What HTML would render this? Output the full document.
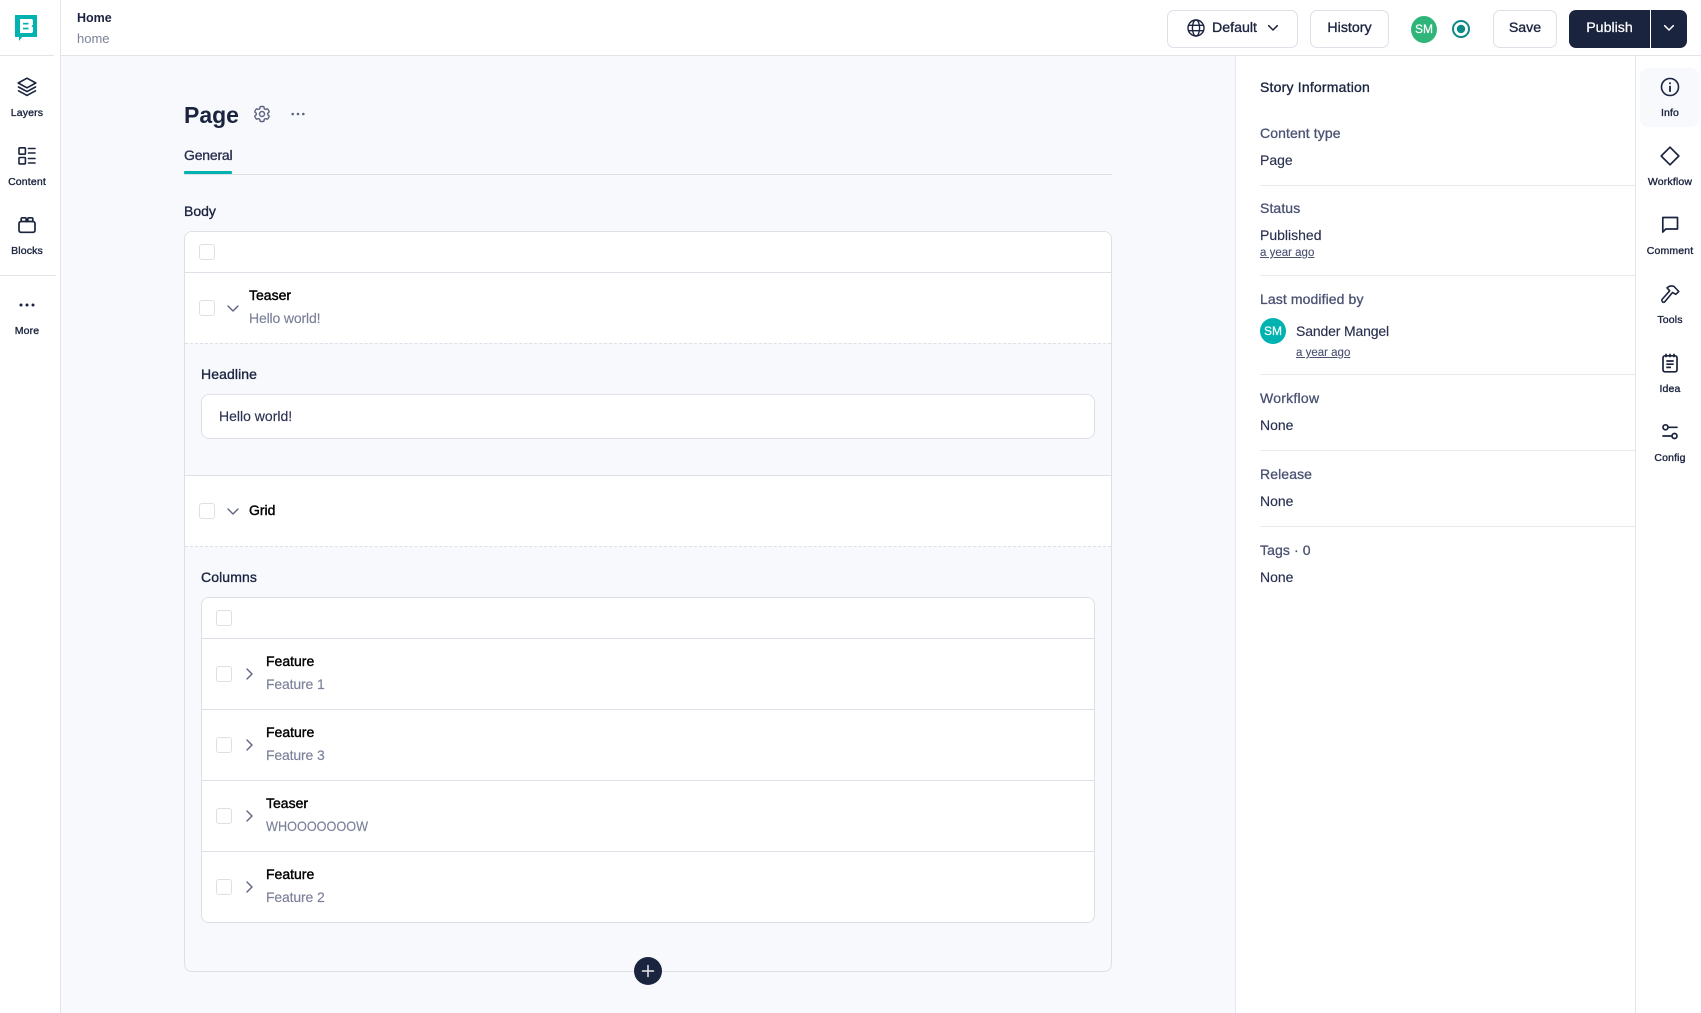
<!DOCTYPE html>
<html><head><meta charset="utf-8"><title>Home</title>
<style>
html,body{margin:0;padding:0}
body{width:1701px;height:1013px;position:relative;overflow:hidden;background:#fff;font-family:"Liberation Sans",sans-serif;color:#1b243f;-webkit-font-smoothing:antialiased}
.a{position:absolute;box-sizing:border-box}
.t{position:absolute;white-space:nowrap;line-height:20px;height:20px}
.m{-webkit-text-stroke:.35px currentColor}
.nl{position:absolute;width:60px;text-align:center;font-size:10.5px;letter-spacing:.15px;line-height:14px;height:14px;-webkit-text-stroke:.35px currentColor;white-space:nowrap}
.lb{font-size:14px;letter-spacing:.1px;color:#4b5272;-webkit-text-stroke:.3px currentColor}
.v{font-size:14px;color:#2a3150;-webkit-text-stroke:.15px currentColor}
.ago{font-size:11.5px;color:#4b5272;text-decoration:underline;-webkit-text-stroke:.1px currentColor}
.hr{position:absolute;left:1260px;width:375px;height:1px;background:#e8e9ef}
.cb{position:absolute;width:16px;height:16px;border:1px solid #dfe0e7;border-radius:3px;background:#fff;box-sizing:border-box}
.tt{font-size:14px;color:#000;-webkit-text-stroke:.4px #000}
.st{font-size:14px;letter-spacing:-.15px;color:#7c8199;-webkit-text-stroke:.15px currentColor}
.btn{position:absolute;top:10px;height:38px;border:1px solid #dfe0e7;border-radius:7px;background:#fff;box-sizing:border-box;font-size:14.2px;text-align:center;line-height:35px;-webkit-text-stroke:.35px currentColor;color:#1b243f}
svg{position:absolute;overflow:visible;fill:none;stroke-linecap:round;stroke-linejoin:round}
</style></head><body>

<!-- main background -->
<div class="a" style="left:61px;top:56px;width:1175px;height:957px;background:#f8f9fd"></div>
<div class="a" style="left:60px;top:0;width:1px;height:1013px;background:#e3e5ee"></div>
<div class="a" style="left:60px;top:55px;width:1641px;height:1px;background:#e3e4ea"></div>
<div class="a" style="left:0;top:55px;width:54px;height:1px;background:#e3e4ea"></div>
<div class="a" style="left:0;top:275px;width:56px;height:1px;background:#e3e4ea"></div>
<div class="a" style="left:1235px;top:56px;width:1px;height:957px;background:#e6e8f1"></div>
<div class="a" style="left:1635px;top:56px;width:1px;height:957px;background:#e3e5ee"></div>

<!-- logo -->
<svg style="left:15px;top:15px" width="22" height="26" viewBox="0 0 22 26">
<path d="M0 0H22V22H7L4 26V22H0Z" fill="#00b3b0"/>
<path d="M5 4H16Q18 4 18 6V9.500L16.500 11 18 12.500V16Q18 18 16 18H5Z" fill="#fff"/>
<rect x="8" y="7.800" width="5.500" height="1.700" fill="#00b3b0"/><rect x="8" y="12.700" width="5.500" height="1.700" fill="#00b3b0"/>
</svg>

<!-- left nav -->
<svg style="left:17px;top:77px" width="20" height="20" viewBox="0 0 20 20" stroke="#1b243f" stroke-width="1.600">
<path d="M10 1.200 18.800 6 10 10.800 1.200 6Z"/><path d="M1.500 10 10 14.600 18.500 10"/><path d="M1.500 13.800 10 18.400 18.500 13.800"/></svg>
<div class="nl" style="left:-3px;top:106px">Layers</div>
<svg style="left:18px;top:147px" width="18" height="18" viewBox="0 0 18 18" stroke="#1b243f" stroke-width="1.600">
<rect x="1" y=".8" width="6.400" height="6.400" rx=".8"/><rect x="1" y="10.500" width="6.400" height="6.400" rx=".8"/>
<path d="M10.500 1.500H17M10.500 6H17M10.500 11.500H17M10.500 16H17"/></svg>
<div class="nl" style="left:-3px;top:175px">Content</div>
<svg style="left:18px;top:216px" width="18" height="18" viewBox="0 0 18 18" stroke="#1b243f" stroke-width="1.700">
<rect x="1" y="5.500" width="16" height="10.800" rx="2"/><path d="M3.200 5.500V3Q3.200 1.800 4.400 1.800H7Q8.200 1.800 8.200 3V5.500M9.800 5.500V3Q9.800 1.800 11 1.800H13.600Q14.800 1.800 14.800 3V5.500"/></svg>
<div class="nl" style="left:-3px;top:244px">Blocks</div>
<svg style="left:19px;top:303px" width="16" height="4" viewBox="0 0 16 4"><circle cx="2" cy="2" r="1.500" fill="#1b243f"/><circle cx="8" cy="2" r="1.500" fill="#1b243f"/><circle cx="14" cy="2" r="1.500" fill="#1b243f"/></svg>
<div class="nl" style="left:-3px;top:324px">More</div>

<!-- header left -->
<div class="t" style="left:77px;top:8px;font-size:12.500px;font-weight:700">Home</div>
<div class="t" style="left:77px;top:29px;font-size:13px;color:#7c8199">home</div>

<!-- header right -->
<div class="btn" style="left:1167px;width:131px"></div>
<svg style="left:1187px;top:19px" width="18" height="18" viewBox="0 0 18 18" stroke="#1b243f" stroke-width="1.400">
<circle cx="9" cy="9" r="8"/><ellipse cx="9" cy="9" rx="3.600" ry="8"/><path d="M1.500 6.300H16.500M1.500 11.700H16.500"/></svg>
<div class="t m" style="left:1212px;top:18px;font-size:14.200px">Default</div>
<svg style="left:1268px;top:25px" width="10" height="6" viewBox="0 0 10 6" stroke="#1b243f" stroke-width="1.500"><path d="M.7.700 5 5 9.300.700"/></svg>
<div class="btn" style="left:1310px;width:79px">History</div>
<div class="a" style="left:1411px;top:16px;width:26px;height:27px;border-radius:50%;background:#2fb57a;color:#fff;font-size:12px;line-height:27px;text-align:center;-webkit-text-stroke:.2px #fff">SM</div>
<svg style="left:1451px;top:19px" width="20" height="20" viewBox="0 0 20 20"><circle cx="10" cy="10" r="8" stroke="#0b8a86" stroke-width="2"/><circle cx="10" cy="10" r="4.200" fill="#0b8a86"/></svg>
<div class="btn" style="left:1493px;width:64px">Save</div>
<div class="a" style="left:1569px;top:10px;width:81px;height:38px;background:#1b243f;border-radius:7px 0 0 7px;color:#fff;font-size:14.200px;line-height:37px;text-align:center;-webkit-text-stroke:.25px #fff">Publish</div>
<div class="a" style="left:1651px;top:10px;width:36px;height:38px;background:#1b243f;border-radius:0 7px 7px 0"></div>
<svg style="left:1664px;top:25px" width="10" height="6" viewBox="0 0 10 6" stroke="#fff" stroke-width="1.500"><path d="M.7.700 5 5 9.300.700"/></svg>

<!-- page title -->
<div class="t" style="left:184px;top:101px;height:28px;line-height:28px;font-size:23px;font-weight:700;color:#1b243f">Page</div>
<svg style="left:252px;top:104px" width="20" height="20" viewBox="0 0 24 24" stroke="#5d6380" stroke-width="1.700">
<path d="M9.594 3.940c.09-.542.56-.94 1.110-.94h2.593c.55 0 1.020.398 1.110.94l.213 1.281c.063.374.313.686.645.870.074.040.147.083.220.127.325.196.720.257 1.075.124l1.217-.456a1.125 1.125 0 0 1 1.370.490l1.296 2.247a1.125 1.125 0 0 1-.260 1.431l-1.003.827c-.293.241-.438.613-.430.992a7.723 7.723 0 0 1 0 .255c-.008.378.137.750.430.991l1.004.827c.424.350.534.955.260 1.430l-1.298 2.247a1.125 1.125 0 0 1-1.369.491l-1.217-.456c-.355-.133-.750-.072-1.076.124a6.470 6.470 0 0 1-.220.128c-.331.183-.581.495-.644.869l-.213 1.281c-.09.543-.56.940-1.110.940h-2.594c-.55 0-1.019-.398-1.110-.940l-.213-1.281c-.062-.374-.312-.686-.644-.870a6.520 6.520 0 0 1-.220-.127c-.325-.196-.720-.257-1.076-.124l-1.217.456a1.125 1.125 0 0 1-1.369-.490l-1.297-2.247a1.125 1.125 0 0 1 .260-1.431l1.004-.827c.292-.240.437-.613.430-.991a6.932 6.932 0 0 1 0-.255c.007-.380-.138-.751-.430-.992l-1.004-.827a1.125 1.125 0 0 1-.260-1.430l1.297-2.247a1.125 1.125 0 0 1 1.370-.491l1.216.456c.356.133.751.072 1.076-.124.072-.044.146-.086.220-.128.332-.183.582-.495.644-.869l.214-1.280Z"/><circle cx="12" cy="12" r="3"/></svg>
<svg style="left:291px;top:112px" width="14" height="4" viewBox="0 0 14 4"><circle cx="1.700" cy="2" r="1.300" fill="#5d6380"/><circle cx="7" cy="2" r="1.300" fill="#5d6380"/><circle cx="12.300" cy="2" r="1.300" fill="#5d6380"/></svg>
<div class="t m" style="left:184px;top:145px;font-size:14px;letter-spacing:-.2px;color:#2a3150">General</div>
<div class="a" style="left:184px;top:174px;width:928px;height:1px;background:#dcdde4"></div>
<div class="a" style="left:184px;top:171px;width:48px;height:3px;background:#00b3b0;border-radius:1px"></div>
<div class="t m" style="left:184px;top:201px;font-size:14px">Body</div>

<!-- outer box -->
<div class="a" style="left:184px;top:231px;width:928px;height:741px;border:1px solid #dfe0e7;border-radius:8px;background:#f8f9fd"></div>
<div class="a" style="left:185px;top:232px;width:926px;height:111px;background:#fff;border-radius:7px 7px 0 0"></div>
<div class="a" style="left:185px;top:272px;width:926px;height:1px;background:#dfe0e7"></div>
<div class="cb" style="left:199px;top:244px"></div>
<div class="cb" style="left:199px;top:300px"></div>
<svg style="left:227px;top:305px" width="12" height="7" viewBox="0 0 12 7" stroke="#5d6380" stroke-width="1.400"><path d="M1 1 6 6 11 1"/></svg>
<div class="t tt" style="left:249px;top:285px">Teaser</div>
<div class="t st" style="left:249px;top:308px">Hello world!</div>
<div class="a" style="left:185px;top:343px;width:926px;height:0;border-top:1px dashed #dfe0e7"></div>

<div class="t m" style="left:201px;top:364px;font-size:14px;letter-spacing:.1px">Headline</div>
<div class="a" style="left:201px;top:394px;width:894px;height:45px;background:#fff;border:1px solid #dfe0e7;border-radius:8px"></div>
<div class="t v" style="left:219px;top:406px">Hello world!</div>

<div class="a" style="left:185px;top:475px;width:926px;height:72px;background:#fff;border-top:1px solid #dfe0e7"></div>
<div class="cb" style="left:199px;top:503px"></div>
<svg style="left:227px;top:508px" width="12" height="7" viewBox="0 0 12 7" stroke="#5d6380" stroke-width="1.400"><path d="M1 1 6 6 11 1"/></svg>
<div class="t tt" style="left:249px;top:500px">Grid</div>
<div class="a" style="left:185px;top:546px;width:926px;height:0;border-top:1px dashed #dfe0e7"></div>

<div class="t m" style="left:201px;top:567px;font-size:14px;letter-spacing:.1px">Columns</div>

<!-- inner box -->
<div class="a" style="left:201px;top:597px;width:894px;height:326px;background:#fff;border:1px solid #dfe0e7;border-radius:8px"></div>
<div class="cb" style="left:216px;top:610px"></div>
<div class="a" style="left:202px;top:638px;width:892px;height:1px;background:#dfe0e7"></div>
<div class="a" style="left:202px;top:709px;width:892px;height:1px;background:#dfe0e7"></div>
<div class="a" style="left:202px;top:780px;width:892px;height:1px;background:#dfe0e7"></div>
<div class="a" style="left:202px;top:851px;width:892px;height:1px;background:#dfe0e7"></div>

<div class="cb" style="left:216px;top:666px"></div>
<svg style="left:246px;top:668px" width="7" height="12" viewBox="0 0 7 12" stroke="#5d6380" stroke-width="1.400"><path d="M1 1 6 6 1 11"/></svg>
<div class="t tt" style="left:266px;top:651px">Feature</div>
<div class="t st" style="left:266px;top:674px">Feature 1</div>

<div class="cb" style="left:216px;top:737px"></div>
<svg style="left:246px;top:739px" width="7" height="12" viewBox="0 0 7 12" stroke="#5d6380" stroke-width="1.400"><path d="M1 1 6 6 1 11"/></svg>
<div class="t tt" style="left:266px;top:722px">Feature</div>
<div class="t st" style="left:266px;top:745px">Feature 3</div>

<div class="cb" style="left:216px;top:808px"></div>
<svg style="left:246px;top:810px" width="7" height="12" viewBox="0 0 7 12" stroke="#5d6380" stroke-width="1.400"><path d="M1 1 6 6 1 11"/></svg>
<div class="t tt" style="left:266px;top:793px">Teaser</div>
<div class="t st" style="left:266px;top:816px;letter-spacing:0;transform:scaleX(.905);transform-origin:0 50%">WHOOOOOOOW</div>

<div class="cb" style="left:216px;top:879px"></div>
<svg style="left:246px;top:881px" width="7" height="12" viewBox="0 0 7 12" stroke="#5d6380" stroke-width="1.400"><path d="M1 1 6 6 1 11"/></svg>
<div class="t tt" style="left:266px;top:864px">Feature</div>
<div class="t st" style="left:266px;top:887px">Feature 2</div>

<!-- plus -->
<svg style="left:634px;top:957px" width="28" height="28" viewBox="0 0 28 28"><circle cx="14" cy="14" r="14" fill="#1b243f"/><path d="M14 8.500V19.500M8.500 14H19.500" stroke="#e6e7ec" stroke-width="1.500"/></svg>

<!-- info panel -->
<div class="t m" style="left:1260px;top:77px;font-size:14px;letter-spacing:.2px">Story Information</div>
<div class="t lb" style="left:1260px;top:123px">Content type</div>
<div class="t v" style="left:1260px;top:150px">Page</div>
<div class="hr" style="top:185px"></div>
<div class="t lb" style="left:1260px;top:198px">Status</div>
<div class="t v" style="left:1260px;top:225px">Published</div>
<div class="t ago" style="left:1260px;top:243px">a year ago</div>
<div class="hr" style="top:275px"></div>
<div class="t lb" style="left:1260px;top:289px">Last modified by</div>
<div class="a" style="left:1260px;top:318px;width:26px;height:26px;border-radius:50%;background:#00b3b0;color:#fff;font-size:12px;line-height:26px;text-align:center;-webkit-text-stroke:.2px #fff">SM</div>
<div class="t v" style="left:1296px;top:321px;letter-spacing:-.15px">Sander Mangel</div>
<div class="t ago" style="left:1296px;top:343px">a year ago</div>
<div class="hr" style="top:374px"></div>
<div class="t lb" style="left:1260px;top:388px;letter-spacing:.25px">Workflow</div>
<div class="t v" style="left:1260px;top:415px">None</div>
<div class="hr" style="top:450px"></div>
<div class="t lb" style="left:1260px;top:464px">Release</div>
<div class="t v" style="left:1260px;top:491px">None</div>
<div class="hr" style="top:526px"></div>
<div class="t lb" style="left:1260px;top:540px">Tags · 0</div>
<div class="t v" style="left:1260px;top:567px">None</div>

<!-- right nav -->
<div class="a" style="left:1640px;top:68px;width:59px;height:59px;border-radius:8px;background:#f8f9fd"></div>
<svg style="left:1660px;top:77px" width="20" height="20" viewBox="0 0 20 20" stroke="#1b243f" stroke-width="1.600"><circle cx="10" cy="10" r="8.500"/><path d="M10 9.500V14.200" stroke-width="1.800"/><circle cx="10" cy="6.300" r="1" fill="#1b243f" stroke="none"/></svg>
<div class="nl" style="left:1640px;top:106px">Info</div>
<svg style="left:1660px;top:146px" width="20" height="20" viewBox="0 0 20 20" stroke="#1b243f" stroke-width="1.700"><path d="M10 1.200 18.800 10 10 18.800 1.200 10Z"/></svg>
<div class="nl" style="left:1640px;top:175px">Workflow</div>
<svg style="left:1661px;top:216px" width="18" height="18" viewBox="0 0 18 18" stroke="#1b243f" stroke-width="1.700"><path d="M1.800 1.500H16.500V13H4.800L1.800 16Z"/></svg>
<div class="nl" style="left:1640px;top:244px">Comment</div>
<svg style="left:1660px;top:284px" width="20" height="20" viewBox="0 0 20 20" stroke="#1b243f" stroke-width="1.600"><path d="M2 15.500 9.700 6.800 7 3.800Q10.500.8 14 2.500L18.800 7.500 15.800 10.300 12.500 8.500 4.600 18Q3.500 18.800 2.500 17.800L2 17Q1.500 16.200 2 15.500Z"/></svg>
<div class="nl" style="left:1640px;top:313px">Tools</div>
<svg style="left:1661px;top:353px" width="18" height="20" viewBox="0 0 18 20" stroke="#1b243f" stroke-width="1.700"><rect x="2" y="2.800" width="14" height="16" rx="2"/><path d="M5 .8V4.300M9 .8V4.300M13 .8V4.300M5.300 8H12.700M5.300 11.200H12.700M5.300 14.400H10" stroke-linecap="butt"/></svg>
<div class="nl" style="left:1640px;top:382px">Idea</div>
<svg style="left:1661px;top:423px" width="18" height="18" viewBox="0 0 18 18" stroke="#1b243f" stroke-width="1.700"><circle cx="4.500" cy="4.300" r="2.500"/><path d="M7 4.300H16M2 13H11"/><circle cx="13.500" cy="13" r="2.500"/></svg>
<div class="nl" style="left:1640px;top:451px">Config</div>

</body></html>
